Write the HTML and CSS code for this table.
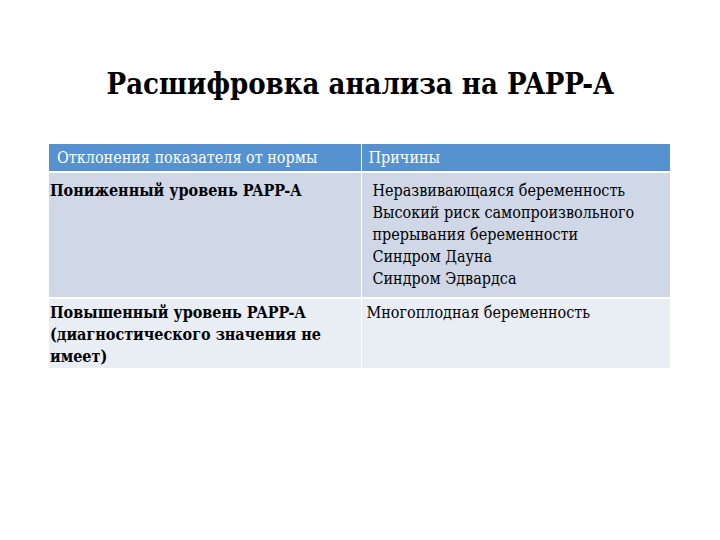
FILE: index.html
```html
<!DOCTYPE html>
<html lang="ru">
<head>
<meta charset="utf-8">
<link rel="stylesheet" href="styles.css">
</head>
<body>
<div class="slide">
  <h1 class="title">Расшифровка анализа на PAPP-A</h1>
  <table class="grid">
    <colgroup><col class="c1"><col class="c2"></colgroup>
    <thead>
      <tr><th>Отклонения показателя от нормы</th><th>Причины</th></tr>
    </thead>
    <tbody>
      <tr class="r1">
        <td class="bold">Пониженный уровень PAPP-A</td>
        <td class="list">Неразвивающаяся беременность<br>Высокий риск самопроизвольного<br>прерывания беременности<br>Синдром Дауна<br>Синдром Эдвардса</td>
      </tr>
      <tr class="r2">
        <td class="bold">Повышенный уровень PAPP-A<br>(диагностического значения не<br>имеет)</td>
        <td class="plain">Многоплодная беременность</td>
      </tr>
    </tbody>
  </table>
</div>
</body>
</html>
```
FILE: styles.css
```css
html, body {
  margin: 0;
  padding: 0;
  background: #ffffff;
}
.slide {
  width: 720px;
  height: 540px;
  padding-top: 64px;
  box-sizing: border-box;
  font-family: "DejaVu Serif", serif;
  font-stretch: condensed;
}
.title {
  margin: 0 0 40px 0;
  text-align: center;
  font-size: 29px;
  line-height: 40px;
  font-weight: bold;
  color: #000;
}
.grid {
  margin-left: 49px;
  width: 621px;
  border-collapse: collapse;
  table-layout: fixed;
}
.c1 { width: 312px; }
.c2 { width: 309px; }
.grid th {
  background: #5592cf;
  color: #ffffff;
  font-weight: normal;
  font-size: 16px;
  text-align: left;
  height: 27px;
  padding: 0 0 0 8px;
  vertical-align: middle;
  border-bottom: 2px solid #ffffff;
}
.grid th + th {
  border-left: 1px solid #ffffff;
  padding-left: 7px;
}
.grid td {
  font-size: 16px;
  line-height: 22px;
  color: #000;
  vertical-align: top;
  padding: 7px 4px 0 1px;
}
.grid td + td {
  border-left: 1px solid #ffffff;
}
.r1 td {
  background: #d0d8e8;
  height: 117px;
  border-bottom: 2px solid #ffffff;
}
.r2 td {
  background: #e9edf4;
  height: 66px;
  padding-top: 3px;
}
.bold {
  font-weight: bold;
}
.list {
  padding-left: 11px !important;
}
.plain {
  padding-left: 5px !important;
}
```
